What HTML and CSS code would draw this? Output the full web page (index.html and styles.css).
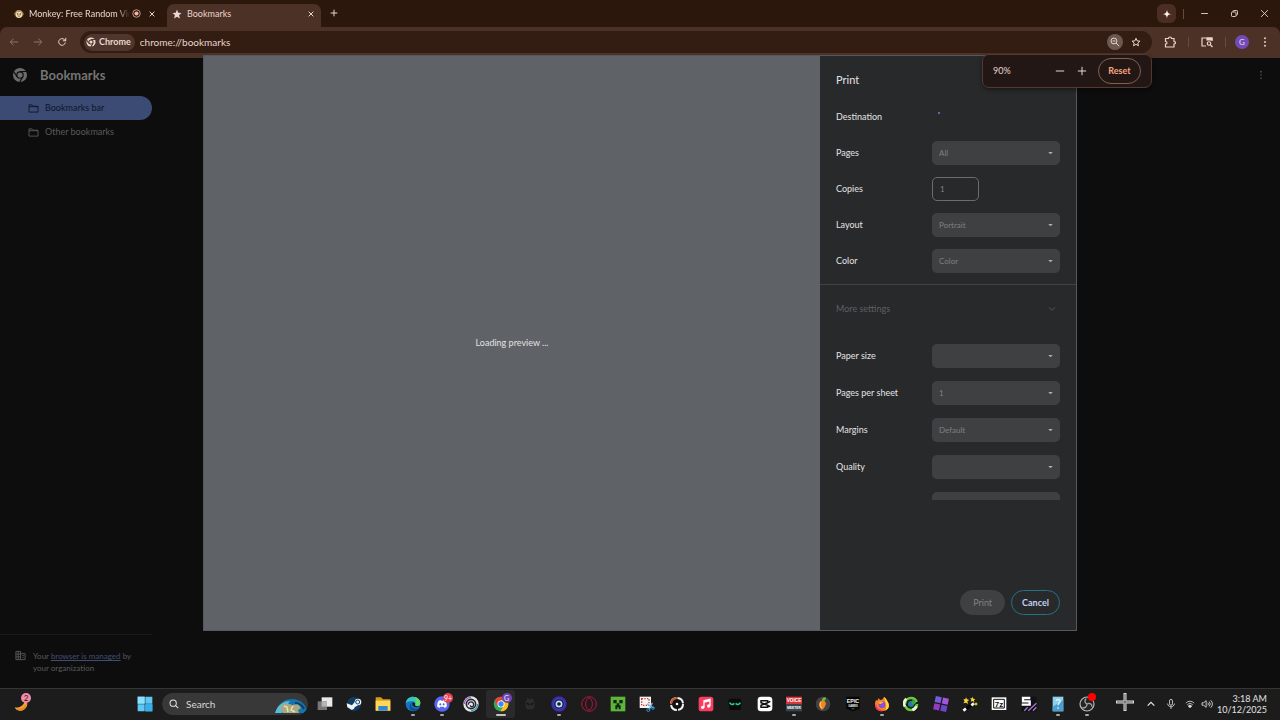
FILE: index.html
```html
<!DOCTYPE html>
<html lang="en">
<head>
<meta charset="UTF-8" />
<meta name="viewport" content="width=device-width, initial-scale=1" />
<title>Bookmarks</title>
<link rel="stylesheet" href="styles.css">
</head>
<body>
<header class="browser">
  <div class="tabstrip">
    <div class="tab">
      <svg class="favicon" viewBox="0 0 24 24"><circle cx="4" cy="12" r="3.5" fill="#9b744d"/><circle cx="20" cy="12" r="3.5" fill="#9b744d"/><circle cx="12" cy="12" r="9.5" fill="#b48a59"/><path d="M5 12c0-7 7-6 7-3 0-3 7-4 7 3 2 4-2 9-7 9s-9-5-7-9z" fill="#f0dfb8"/><circle cx="9" cy="12" r="1.6" fill="#332015"/><circle cx="15" cy="12" r="1.6" fill="#332015"/><path d="M9 16q3 3 6 0" stroke="#332015" stroke-width="1.5" fill="none"/></svg>
      <a class="tab-title faded" href="#">Monkey: Free Random Vide</a>
      <svg class="recording" viewBox="0 0 24 24"><circle cx="12" cy="12" r="10" fill="none" stroke="#d9a394" stroke-width="2.4"/><circle cx="12" cy="12" r="5.5" fill="#f0b6a6"/></svg>
      <button class="icon-btn small" aria-label="Close tab"><svg viewBox="0 0 24 24"><path d="M5 5l14 14M19 5L5 19"/></svg></button>
    </div>
    <div class="tab active">
      <svg class="favicon" viewBox="0 0 24 24"><path d="M12 1l3 8 8 .6-6 5 2 8-7-4.300-7 4.300 2-8-6-5 8-.6z" fill="#ecd8d0"/></svg>
      <a class="tab-title" href="#">Bookmarks</a>
      <button class="icon-btn small" aria-label="Close tab"><svg viewBox="0 0 24 24"><path d="M5 5l14 14M19 5L5 19"/></svg></button>
    </div>
    <button class="icon-btn new-tab" aria-label="New tab"><svg viewBox="0 0 24 24"><path d="M12 2v20M2 12h20"/></svg></button>
    <div class="window-controls">
      <button class="icon-btn spark" aria-label="Gemini"><svg viewBox="0 0 24 24"><path d="M12 1c1 8 3 10 11 11-8 1-10 3-11 11-1-8-3-10-11-11 8-1 10-3 11-11z" fill="#fff0ea" stroke="none"/></svg></button>
      <span class="divider"></span>
      <button class="icon-btn win" aria-label="Minimize"><svg viewBox="0 0 24 24"><path d="M3 12h18"/></svg></button>
      <button class="icon-btn win" aria-label="Restore"><svg viewBox="0 0 24 24"><rect x="4" y="8" width="12" height="12" rx="2"/><path d="M8 8V6q0-2 2-2h8q2 0 2 2v8q0 2-2 2h-2"/></svg></button>
      <button class="icon-btn win" aria-label="Close"><svg viewBox="0 0 24 24"><path d="M3 3l18 18M21 3L3 21"/></svg></button>
    </div>
  </div>

  <div class="toolbar">
    <nav class="nav-buttons">
      <button class="icon-btn dim" aria-label="Back"><svg viewBox="0 0 24 24"><path d="M22 12H3M11 4l-8 8 8 8"/></svg></button>
      <button class="icon-btn dim" aria-label="Forward"><svg viewBox="0 0 24 24"><path d="M2 12h19M13 4l8 8-8 8"/></svg></button>
      <button class="icon-btn" aria-label="Reload"><svg viewBox="0 0 24 24"><path d="M20 13a8 8 0 1 1-2.500-7L21 9M21 2v7h-7"/></svg></button>
    </nav>
    <div class="omnibox">
      <button class="site-chip">
        <svg viewBox="0 0 24 24"><circle cx="12" cy="12" r="11" fill="#e9d5cd"/><circle cx="12" cy="12" r="5" fill="#e9d5cd" stroke="#4f362d" stroke-width="2.5"/><path d="M12 6h10M6.800 15L1.500 7M17 15l-5 8.500" stroke="#4f362d" stroke-width="2.500"/></svg>
        Chrome
      </button>
      <input class="url" type="text" aria-label="Address" value="chrome://bookmarks">
      <button class="icon-btn zoomed" aria-label="Zoom"><svg viewBox="0 0 24 24"><circle cx="9.500" cy="9.500" r="7"/><path d="M14.500 14.500L22 22M6.500 9.500h6"/></svg></button>
      <button class="icon-btn star" aria-label="Bookmark this page"><svg viewBox="0 0 24 24"><path d="M12 3l2.700 6.300 6.800.6-5.200 4.500 1.600 6.700L12 17.500l-5.900 3.600 1.600-6.700L2.500 9.900l6.800-.6z"/></svg></button>

      <div class="zoom-bubble">
        <span class="zoom-value">90%</span>
        <button class="icon-btn" aria-label="Zoom out"><svg viewBox="0 0 24 24"><path d="M2 12h20"/></svg></button>
        <button class="icon-btn" aria-label="Zoom in"><svg viewBox="0 0 24 24"><path d="M12 2v20M2 12h20"/></svg></button>
        <button class="reset">Reset</button>
      </div>
    </div>
    <div class="toolbar-actions">
      <button class="icon-btn" aria-label="Extensions"><svg viewBox="0 0 24 24"><path d="M3 5h6c0-4 6-4 6 0h5v6c4 0 4 5 0 5v6H3v-6c4 0 4-5 0-5z"/></svg></button>
      <span class="divider"></span>
      <button class="icon-btn" aria-label="Search tabs"><svg viewBox="0 0 24 24"><path d="M10 20H2V4h20v6M12 6h10"/><path d="M12 4h10v4H12z" fill="currentColor"/><circle cx="16" cy="15" r="3.500"/><path d="M19 18l4 4"/></svg></button>
      <span class="divider"></span>
      <button class="avatar" aria-label="Profile">G</button>
      <button class="icon-btn menu" aria-label="Menu"><svg class="dots" viewBox="0 0 24 24"><circle cx="12" cy="3" r="2.300"/><circle cx="12" cy="12" r="2.300"/><circle cx="12" cy="21" r="2.300"/></svg></button>
    </div>
  </div>
</header>

<main class="page">
  <aside class="sidebar">
    <div class="brand">
      <svg viewBox="0 0 24 24"><circle cx="12" cy="12" r="12" fill="#6c6c6c"/><circle cx="12" cy="12" r="5.500" fill="#6c6c6c" stroke="#0d0d0d" stroke-width="2"/><path d="M12 6h11M6.800 15L1.500 6.500M17 15l-5.500 9" stroke="#0d0d0d" stroke-width="2"/></svg>
      <h1>Bookmarks</h1>
    </div>
    <a class="folder selected" href="#"><svg viewBox="0 0 24 20"><path d="M2 2h7l3 3h10v13H2zM2 6h20"/></svg>Bookmarks bar</a>
    <a class="folder" href="#"><svg viewBox="0 0 24 20"><path d="M2 2h7l3 3h10v13H2zM2 6h20"/></svg>Other bookmarks</a>
    <div class="managed">
      <svg viewBox="0 0 24 24"><path d="M2 3h10v18H2zM12 8h10v13H12M2 9h10M2 15h10M7 3v18M16 12h3M16 16h3"/></svg>
      <p>Your <a href="#">browser is managed</a> by your organization</p>
    </div>
  </aside>
  <button class="icon-btn page-menu" aria-label="Organize"><svg class="dots" viewBox="0 0 24 24"><circle cx="12" cy="4" r="2"/><circle cx="12" cy="12" r="2"/><circle cx="12" cy="20" r="2"/></svg></button>

  <div class="overlay">
    <section class="dialog" role="dialog" aria-label="Print">
      <div class="preview">Loading preview&nbsp;...</div>
      <form class="settings">
        <h2>Print</h2>
        <div class="scroll">
          <div class="fields">
            <div class="field"><span>Destination</span><i class="spinner"></i></div>
            <div class="field"><label for="pages">Pages</label><select id="pages" disabled><option>All</option></select></div>
            <div class="field"><label for="copies">Copies</label><input id="copies" type="text" value="1" disabled></div>
            <div class="field"><label for="layout">Layout</label><select id="layout" disabled><option>Portrait</option></select></div>
            <div class="field"><label for="color">Color</label><select id="color" disabled><option>Color</option></select></div>
          </div>
          <button type="button" class="more" disabled>More settings<svg viewBox="0 0 24 24"><path d="M3 7l9 9 9-9"/></svg></button>
          <div class="fields extra">
            <div class="field"><label for="paper">Paper size</label><select id="paper" disabled><option></option></select></div>
            <div class="field"><label for="sheet">Pages per sheet</label><select id="sheet" disabled><option>1</option></select></div>
            <div class="field"><label for="margins">Margins</label><select id="margins" disabled><option>Default</option></select></div>
            <div class="field"><label for="quality">Quality</label><select id="quality" disabled><option></option></select></div>
            <div class="field"><label for="scale">Scale</label><select id="scale" disabled><option></option></select></div>
          </div>
        </div>
        <div class="buttons">
          <button type="button" class="pill" disabled>Print</button>
          <button type="button" class="pill cancel">Cancel</button>
        </div>
      </form>
    </section>
  </div>
</main>

<footer class="taskbar">
  <button class="app widget" aria-label="Weather">
    <svg viewBox="0 0 24 24"><path d="M17 4c7 8 1 18-8 18-4 0-7-2-8-5 7 2 15-3 16-13z" fill="#f2a532"/><path d="M2 18c7 3 14-1 17-8 1 7-4 12-10 12-3 0-6-2-7-4z" fill="#e58b22"/></svg>
    <span class="badge pink">2</span>
  </button>
  <button class="app start" aria-label="Start"><svg viewBox="0 0 24 24"><path d="M1 1h10.500v10.500H1zM12.500 1H23v10.500H12.500zM1 12.500h10.500V23H1zM12.500 12.500H23V23H12.500z" fill="#5cc8f5"/><path d="M1 1h10.500v10.500H1z" fill="#8be0fb"/><path d="M12.500 12.500H23V23H12.500z" fill="#35b0ee"/></svg></button>
  <label class="search">
    <svg class="lens" viewBox="0 0 24 24"><circle cx="10" cy="10" r="7.500"/><path d="M15.500 15.500L22 22"/></svg>
    <input type="text" placeholder="Search" aria-label="Search">
    <svg class="art" viewBox="0 0 32 14"><path d="M0 14C3 4 10 0 17 0c8 0 14 5 15 12l-2 2z" fill="#1673b0"/><path d="M0 14C3 5 9 2 15 2l-4 5-4 7z" fill="#57bdd9"/><path d="M7 6l5-2 5 2 6-1 3 4-3 2 1 3H8l-1-3-3-1z" fill="#a9a883"/><path d="M9 7l3 1 1 5M18 7l-2 4 4 2" stroke="#ebe0ae" stroke-width="1.500" fill="none"/><path d="M20 4q6 0 9 6" stroke="#0b3e68" stroke-width="2" fill="none"/></svg>
  </label>
  <div class="apps">
    <button class="app" aria-label="Task view"><svg viewBox="0 0 24 24"><path d="M7 2h16v14H7z" fill="#e9e9e9"/><path d="M1 8h14v13H1z" fill="#777"/><path d="M7 8h8v8H7z" fill="#b5b5b5"/></svg></button>
    <button class="app" aria-label="Steam"><svg viewBox="0 0 24 24"><circle cx="12" cy="12" r="10.500" fill="#123b60"/><path d="M1 11l8 3 4-5a5 5 0 1 1 5 5l-5 3a4 4 0 0 1-7 2l-4-2z" fill="#eef3f7"/><circle cx="17.500" cy="9" r="3" fill="#e7eef5" stroke="#174d79" stroke-width="1.500"/></svg></button>
    <button class="app" aria-label="File Explorer"><svg viewBox="0 0 24 24"><path d="M1 2h8l3 3h11v17H1z" fill="#d79b19"/><path d="M1 7h22v15H1z" fill="#ffd65a"/><path d="M5 15h14v7H5z" fill="#2e8acb"/></svg></button>
    <button class="app running" aria-label="Edge"><svg viewBox="0 0 24 24"><circle cx="12" cy="12" r="11" fill="#1475c8"/><path d="M1 11C2 4 7 1 12 1c7 0 11 5 11 9 0 5-6 6-8 4 2-4-1-6-4-6-4 0-7 0-10 3z" fill="#39c6b7"/><path d="M15 2c5 1 8 5 8 8 0 5-6 6-8 4 2-3 1-8 0-12z" fill="#65d86c"/><path d="M10 11c-3 5 2 10 11 7-6 8-16 4-14-3 0-2 1-3 3-4z" fill="#124f91"/><path d="M11 10c-1 4 2 7 8 7l3-2c-4 1-7 0-7-2 1-2-1-4-4-3z" fill="#1b1b1b"/></svg></button>
    <button class="app running" aria-label="Discord"><svg viewBox="0 0 24 24"><circle cx="12" cy="12" r="11.500" fill="#5865f2"/><path d="M7 7l3-1 1 1h2l1-1 3 1c2 3 2.500 6 2 9l-3 2-1.500-2h-5L8 18l-3-2c-.5-3 0-6 2-9z" fill="#fff"/><circle cx="9.500" cy="12.500" r="1.600" fill="#5865f2"/><circle cx="14.500" cy="12.500" r="1.600" fill="#5865f2"/></svg><span class="badge red">9+</span></button>
    <button class="app" aria-label="Ubisoft"><svg viewBox="0 0 24 24"><circle cx="12" cy="12" r="11.500" fill="#e8e8ec"/><path d="M2 12a10 10 0 0 1 10-10" stroke="#9d61c6" stroke-width="2" fill="none"/><path d="M22 12a10 10 0 0 1-10 10" stroke="#3b96a8" stroke-width="2" fill="none"/><circle cx="12" cy="12" r="7" fill="none" stroke="#252832" stroke-width="2.400"/><path d="M8 13c0-6 8-5 8 0 0 4-5 4-5 1" fill="none" stroke="#252832" stroke-width="2"/></svg></button>
    <button class="app current" aria-label="Chrome"><svg viewBox="0 0 24 24"><circle cx="12" cy="12" r="11" fill="#35a853"/><path d="M2.500 6.500A11 11 0 0 1 21.500 6.500H12L7 15z" fill="#ea4335"/><path d="M21.500 6.500A11 11 0 0 1 11 23l5.500-8.500L12 6.500z" fill="#fbc116"/><circle cx="12" cy="12" r="5.300" fill="#fff"/><circle cx="12" cy="12" r="4" fill="#4285f4"/></svg><span class="badge purple">G</span></button>
    <button class="app" aria-label="Game"><svg viewBox="0 0 24 24"><path d="M7 6l1-3 4 2 4-2 1 3c3 4 2 12-1 14H8C5 18 4 10 7 6z" fill="#2b2c2e"/><path d="M7 11l4 2M17 11l-4 2" stroke="#101010" stroke-width="2"/></svg></button>
    <button class="app running" aria-label="Recorder"><svg viewBox="0 0 24 24"><circle cx="12" cy="12" r="11.500" fill="#3f28b3"/><circle cx="12" cy="12" r="8" fill="#101940" stroke="#3c50b0" stroke-width="1.500"/><circle cx="12" cy="12" r="4" fill="none" stroke="#c8d6f6" stroke-width="2.500"/></svg></button>
    <button class="app" aria-label="Opera GX"><svg viewBox="0 0 24 24"><g fill="none" stroke="#b3153f" stroke-width="1.500"><circle cx="12" cy="12" r="11"/><ellipse cx="12" cy="12" rx="5" ry="9"/></g></svg></button>
    <button class="app" aria-label="Minecraft"><svg viewBox="0 0 24 24"><path d="M1 1h22v22H1z" fill="#5db63b"/><path d="M5 6h5v5H5zM14 6h5v5h-5zM10 11h4v3h2v6h-3v-3h-2v3H8v-6h2z" fill="#102411"/></svg></button>
    <button class="app" aria-label="Snipping Tool"><svg viewBox="0 0 24 24"><path d="M1 1h17v17H1z" fill="#f3f3f3"/><path d="M4 4h11v10H4z" stroke="#cc392e" stroke-width="2" stroke-dasharray="2 2" fill="none"/><path d="M12 12l10 6M20 10l-5 11" stroke="#79b9df" stroke-width="2"/><circle cx="14" cy="21" r="2.300" fill="none" stroke="#2c8cca" stroke-width="1.500"/><circle cx="21" cy="18" r="2" fill="none" stroke="#2c8cca" stroke-width="1.500"/></svg></button>
    <button class="app" aria-label="Tracker"><svg viewBox="0 0 24 24"><circle cx="12" cy="12" r="9" fill="#111" stroke="#f1f1f1" stroke-width="3" stroke-dasharray="12 2"/><path d="M3 12a9 9 0 0 1 9-9" fill="none" stroke="#c7512b" stroke-width="3"/><circle cx="12" cy="12" r="2" fill="#fff"/></svg></button>
    <button class="app" aria-label="Music"><svg viewBox="0 0 24 24"><rect x="1" y="1" width="22" height="22" rx="4" fill="#fa3c60"/><path d="M9 17V7l9-2v10M9 9l9-2" stroke="#fff" stroke-width="2" fill="none"/><circle cx="7" cy="17" r="2.500" fill="#fff"/><circle cx="16" cy="15" r="2.500" fill="#fff"/></svg></button>
    <button class="app" aria-label="Mask"><svg viewBox="0 0 24 24"><path d="M4 4h16l2 5-2 12H4L2 9z" fill="#090b0b"/><path d="M4 10q3 5 7 1M13 11q4 4 7-1" stroke="#28cda0" stroke-width="2.500" fill="none"/></svg></button>
    <button class="app" aria-label="CapCut"><svg viewBox="0 0 24 24"><rect x="1" y="1" width="22" height="22" rx="5" fill="#fff"/><path d="M20 8l-4 2V7H6v3l10 4v3H6v-3l10-4M20 16l-4-2" fill="none" stroke="#111" stroke-width="2.300"/></svg></button>
    <button class="app running" aria-label="Voicemeeter"><svg viewBox="0 0 24 24"><path d="M0 1h24v11H0z" fill="#d6353b"/><path d="M0 12h24v11H0z" fill="#3b434d"/><g fill="#fff" font-family="Liberation Sans" font-weight="bold" font-size="7" text-anchor="middle"><text x="12" y="9">VOICE</text><text x="12" y="20" font-size="5">MEETER</text></g></svg></button>
    <button class="app" aria-label="FL Studio"><svg viewBox="0 0 24 24"><circle cx="12" cy="12" r="11" fill="#404246"/><path d="M8 8c3-3 10 0 8 5-1 4-4 7-6 8-3-4-5-9-2-13z" fill="#f3841f"/><path d="M9 9c-2 3-1 7 1 9" stroke="#ffc15a" stroke-width="2" fill="none"/><path d="M11 8c-2-3 1-6 5-6 1 3-1 6-5 6z" fill="#78b63a"/></svg></button>
    <button class="app" aria-label="Epic Games"><svg viewBox="0 0 24 24"><path d="M2 1h20v18l-10 4-10-4z" fill="#050505"/><g fill="#f6f6f6" font-family="Liberation Sans" font-weight="bold" text-anchor="middle"><text x="12" y="11" font-size="8">EPIC</text><text x="12" y="17" font-size="4">GAMES</text></g><path d="M9 19h6l-3 1z" fill="#fff"/></svg></button>
    <button class="app running" aria-label="Firefox"><svg viewBox="0 0 24 24"><path d="M3 6l2 1 2-4 2 3c3-1 5-1 6-5 2 2 4 4 5 7 6 8 0 15-8 15C3 23-1 14 3 6z" fill="#ff7d26"/><path d="M15 1c2 2 4 4 5 7 5 8 1 12-3 14 3-7 0-13-2-21z" fill="#ffd43a"/><path d="M3 11c0 6 6 12 13 10-8 5-17-2-13-10z" fill="#f23653"/><circle cx="12" cy="13" r="5" fill="#8552d5"/><path d="M6 10c3-3 7-2 8 0-2 0-3 2-5 2z" fill="#ffb338"/></svg></button>
    <button class="app" aria-label="Sync"><svg viewBox="0 0 24 24"><circle cx="12" cy="12" r="9" fill="none" stroke="#69c83b" stroke-width="4" stroke-dasharray="24 4"/><path d="M5 4a10 10 0 0 0-2 12M20 15a9 9 0 0 1-6 6" stroke="#eef3d3" stroke-width="4" fill="none"/><circle cx="12" cy="12" r="4.500" fill="#1e7d9c"/><path d="M12 8h2V4l6 6-5 4z" fill="#39a45a"/></svg></button>
    <button class="app" aria-label="Tiles"><svg viewBox="0 0 24 24"><g transform="rotate(12 12 12)"><path d="M2 2h9v9H2z" fill="#775bdd"/><path d="M13 2h9v9h-9z" fill="#a257da"/><path d="M2 13h9v9H2z" fill="#943ac2"/><path d="M13 13h9v9h-9z" fill="#6946ce"/></g></svg></button>
    <button class="app" aria-label="Wand"><svg viewBox="0 0 24 24"><path d="M2 22L17 12" stroke="#080808" stroke-width="5"/><path d="M2 22l4-3M14 14l4-3" stroke="#f3f3f3" stroke-width="4"/><path d="M6 2l1.500 3L11 6 8 8l1 4-3-2-4 1 2-3-2-3h3zM16 1l1 3 3 .5-2 2 .5 3-2.500-2-3 1 1-3-2-2h3zM21 9l1 2 2 1-2 1-1 2-1-2-2-1 2-1z" fill="#f8d63c"/></svg></button>
    <button class="app" aria-label="7-Zip"><svg viewBox="0 0 24 24"><path d="M1 2h22v19H1z" fill="#fff"/><path d="M4 5h16v13H4z" fill="none" stroke="#111" stroke-width="1.500"/><text x="12" y="16" fill="#111" font-family="Liberation Sans" font-weight="bold" font-size="12" text-anchor="middle">7z</text></svg></button>
    <button class="app" aria-label="Streaming tool"><svg viewBox="0 0 24 24"><path d="M1 1h22v22H1z" fill="#11101a"/><path d="M5 22l5-5M11 22L23 11M18 22l5-5" stroke="#a878c8" stroke-width="2"/><path d="M14 3H3v5h10v5H1" fill="none" stroke="#fff" stroke-width="3.500"/></svg></button>
    <button class="app running" aria-label="Notes"><svg viewBox="0 0 24 24"><path d="M4 1h16v22H4z" fill="#8cd0ef"/><path d="M4 16l16-10v17H4z" fill="#4b9ed0"/><path d="M9 7q3-4 6 0c1 3-3 3-3 7M12 17v2" fill="none" stroke="#e9f7fd" stroke-width="2"/></svg></button>
    <button class="app running" aria-label="OBS"><svg viewBox="0 0 24 24"><circle cx="12" cy="12" r="10.500" fill="#242426" stroke="#bababa" stroke-width="1.800"/><path d="M12 12c-4-2-4-6-1-8M12 12c4-2 8 0 7 4M12 12c0 5-4 7-7 5" stroke="#a2a2a2" stroke-width="2" fill="none"/></svg><span class="badge rec"></span></button>
  </div>
  <div class="tray">
    <svg class="crosshair" viewBox="0 0 18 18"><path d="M9 0v18M0 9h18" stroke="#ddd" stroke-width="3"/><path d="M9 1v16M1 9h16" stroke="#555" stroke-width="1"/></svg>
    <button class="tray-btn" aria-label="Show hidden icons"><svg viewBox="0 0 24 24"><path d="M4 16l8-8 8 8" stroke-width="3"/></svg></button>
    <button class="tray-btn" aria-label="Microphone"><svg viewBox="0 0 24 24"><rect x="8.500" y="1" width="7" height="14" rx="3.500"/><path d="M4 11c0 10 16 10 16 0M12 19v5"/></svg></button>
    <button class="tray-btn quick" aria-label="Network and volume">
      <svg viewBox="0 0 24 24"><path d="M2 10c6-6 14-6 20 0M5.500 14c4-4 9-4 13 0"/><path d="M8 17q4-4 8 0l-4 4z" fill="currentColor"/></svg>
      <svg class="speaker" viewBox="0 0 28 24"><path d="M2 9h4l6-5v16l-6-5H2zM16 9q3 3 0 6M19 6q6 6 0 12M23 3q8 9 0 18"/></svg>
    </button>
    <div class="clock"><span>3:18 AM</span><span>10/12/2025</span></div>
  </div>
</footer>
</body>
</html>
```
FILE: styles.css
```css
* {
  box-sizing: border-box;
}
body {
  margin: 0;
  height: 100vh;
  display: flex;
  flex-direction: column;
  overflow: hidden;
  background: #0d0d0d;
  color: #e3e3e3;
  font-family: Lato, "Open Sans", sans-serif;
  font-size: 9px;
  line-height: 12px;
}
button, input, select {
  font: inherit;
  color: inherit;
  border: 0;
  margin: 0;
  padding: 0;
  background: none;
}
a {
  color: inherit;
  text-decoration: none;
}
svg {
  display: block;
  flex: none;
}

/* Browser chrome */
.browser {
  color: #e9d5cd;
  background: #2c170d;
}
.tabstrip {
  display: flex;
  align-items: flex-end;
  height: 27px;
  padding-left: 6px;
}
.tab {
  display: flex;
  align-items: center;
  gap: 5px;
  width: 156px;
  height: 23px;
  padding: 0 4px 4px 8px;
}
.tab.active {
  width: 154px;
  margin-left: 5px;
  padding-left: 5px;
  border-radius: 7px 7px 0 0;
  background: #4c3127;
}
.favicon {
  width: 10px;
  height: 10px;
}
.tab-title {
  flex: 1;
  overflow: hidden;
  white-space: nowrap;
}
.tab-title.faded {
  margin-right: -3px;
  mask-image: linear-gradient(90deg, #000 88%, transparent);
}
.recording {
  width: 9px;
  height: 9px;
}
.icon-btn {
  display: flex;
  align-items: center;
  justify-content: center;
  flex: none;
  width: 20px;
  height: 20px;
  border-radius: 50%;
}
.icon-btn svg {
  width: 10px;
  height: 10px;
  fill: none;
  stroke: currentColor;
  stroke-width: 2.4;
}
.icon-btn .dots {
  fill: currentColor;
  stroke: none;
}
.icon-btn.small {
  width: 12px;
  height: 12px;
}
.icon-btn.small svg {
  width: 8px;
  height: 8px;
  stroke-width: 3;
}
.new-tab {
  margin: 0 0 4px 3px;
}
.new-tab svg {
  width: 8px;
  height: 8px;
  stroke-width: 3;
}
.window-controls {
  display: flex;
  align-items: center;
  height: 27px;
  margin-left: auto;
  padding-right: 1px;
}
.window-controls .spark {
  width: 19px;
  height: 19px;
  margin-right: 7px;
  border-radius: 6px;
  background: #4a2e23;
}
.win {
  width: 30px;
}
.win svg {
  width: 9px;
  height: 9px;
}
.divider {
  width: 1px;
  height: 10px;
  background: #6a4a3d;
}
.window-controls .divider {
  margin-right: 5px;
}
.toolbar {
  display: flex;
  align-items: center;
  height: 31px;
  padding-bottom: 1px;
  background: #4c3127;
  border-radius: 7px 7px 0 0;
}
.nav-buttons {
  display: flex;
  gap: 4px;
  width: 80px;
  padding-left: 4px;
}
.icon-btn.dim {
  color: #8f7468;
}
.omnibox {
  position: relative;
  display: flex;
  align-items: center;
  flex: 1;
  height: 22px;
  padding: 0 6px 0 4px;
  border-radius: 11px;
  background: #331d13;
}
.site-chip {
  display: flex;
  align-items: center;
  gap: 3px;
  height: 17px;
  padding: 0 4px 0 2px;
  border-radius: 9px;
  background: #4f362d;
  font-weight: 700;
}
.site-chip svg {
  width: 10px;
  height: 10px;
}
.url {
  flex: 1;
  min-width: 0;
  margin-left: 5px;
  font-size: 10px;
}
.zoomed {
  width: 16px;
  height: 16px;
  background: #6d5850;
}
.star {
  margin-left: 3px;
}
.toolbar-actions {
  display: flex;
  align-items: center;
  gap: 8px;
  padding: 0 5px 0 8px;
}
.toolbar-actions svg {
  width: 12px;
  height: 12px;
}
.toolbar-actions .menu svg {
  width: 10px;
  height: 10px;
}
.avatar {
  width: 14px;
  height: 14px;
  border-radius: 50%;
  background: #744bb5;
  color: #eadff8;
  font-size: 8px;
}
.toolbar-actions .divider + .avatar {
  margin-left: 1px;
}
.toolbar-actions .menu {
  margin-left: -2px;
}
.zoom-bubble {
  position: absolute;
  top: 23px;
  right: 0;
  z-index: 4;
  display: flex;
  align-items: center;
  width: 170px;
  height: 34px;
  padding: 0 10px;
  border: 1px solid #54392e;
  border-radius: 7px;
  background: #231716;
  box-shadow: 0 2px 4px rgba(0, 0, 0, 0.4);
}
.zoom-value {
  flex: 1;
}
.zoom-bubble .icon-btn {
  width: 22px;
}
.reset {
  width: 43px;
  height: 26px;
  margin-left: 5px;
  border: 1px solid #80604f;
  border-radius: 13px;
  color: #f8a581;
  font-weight: 700;
}

/* Bookmarks page */
.page {
  position: relative;
  flex: 1;
  min-height: 0;
  display: flex;
  justify-content: space-between;
}
.sidebar {
  display: flex;
  flex-direction: column;
  width: 152px;
  color: #5a5a5a;
}
.brand {
  display: flex;
  align-items: center;
  gap: 13px;
  height: 38px;
  padding: 0 0 4px 13px;
}
.brand svg {
  width: 14px;
  height: 14px;
}
.brand h1 {
  margin: 0;
  color: #747474;
  font-size: 13px;
  font-weight: 700;
}
.folder {
  display: flex;
  align-items: center;
  gap: 6px;
  height: 24px;
  padding-left: 28px;
  border-radius: 0 12px 12px 0;
}
.folder svg {
  width: 11px;
  height: 9px;
  fill: none;
  stroke: currentColor;
  stroke-width: 2;
}
.folder.selected {
  background: #3b4b73;
  color: #0d172b;
}
.managed {
  display: flex;
  gap: 7px;
  margin-top: auto;
  padding: 15px 12px 14px 15px;
  border-top: 1px solid #191919;
}
.managed svg {
  width: 11px;
  height: 11px;
  fill: none;
  stroke: currentColor;
  stroke-width: 2;
}
.managed p {
  margin: 0;
  font-size: 8px;
}
.managed a {
  color: #414d73;
  text-decoration: underline;
}
.page-menu {
  margin: 7px 9px 0 0;
  color: #555;
}

/* Print dialog */
.overlay {
  position: absolute;
  inset: -3px 0 0;
  z-index: 3;
  display: flex;
  justify-content: center;
  padding-bottom: 57px;
}
.dialog {
  display: flex;
  width: 874px;
  max-width: 100%;
  border: 1px solid #55585c;
  background: #28292b;
}
.preview {
  flex: 1;
  display: grid;
  place-items: center;
  background: #5f6267;
}
.settings {
  display: flex;
  flex-direction: column;
  width: 256px;
}
.settings h2 {
  margin: 0;
  padding: 17px 16px 14px;
  font-size: 11px;
  font-weight: 400;
  line-height: 14px;
}
.scroll {
  height: 399px;
  overflow: hidden;
}
.fields {
  display: grid;
  gap: 12px;
  padding: 4px 16px 11px;
}
.fields.extra {
  gap: 13px;
  padding-top: 11px;
}
.field {
  display: flex;
  align-items: center;
  height: 24px;
}
.field span, .field label {
  width: 96px;
}
.field select, .field input {
  height: 24px;
  padding: 0 7px;
  border-radius: 5px;
  color: #818181;
  font-size: 8px;
  opacity: 1;
}
.field select {
  flex: 1;
  appearance: none;
  background: #3f4042 url("data:image/svg+xml,%3Csvg xmlns='http://www.w3.org/2000/svg' viewBox='0 0 6 4'%3E%3Cpath d='M0 0h6L3 3z' fill='%23b0b0b0'/%3E%3C/svg%3E") no-repeat right 7px center / 5px 3px;
}
.field input {
  width: 47px;
  border: 1px solid #6b6c6e;
}
.spinner {
  width: 2px;
  height: 2px;
  margin: 0 0 9px 6px;
  border-radius: 50%;
  background: #6285d2;
}
.more {
  display: flex;
  align-items: center;
  justify-content: space-between;
  width: 100%;
  height: 49px;
  padding: 0 20px 0 16px;
  border-top: 1px solid #414244;
  color: #5e5f61;
}
.more svg {
  width: 8px;
  height: 8px;
  fill: none;
  stroke: currentColor;
  stroke-width: 2.5;
}
.buttons {
  display: flex;
  justify-content: flex-end;
  gap: 6px;
  margin-top: auto;
  padding: 15px 16px;
}
.pill {
  height: 25px;
  padding: 0 12px;
  border: 1px solid #3f4042;
  border-radius: 13px;
  background: #3f4042;
  color: #818181;
  font-weight: 400;
}
.pill.cancel {
  padding: 0 10px;
  border-color: #267184;
  background: none;
  color: #c4cff5;
  font-weight: 700;
}

/* Taskbar */
.taskbar {
  display: flex;
  align-items: center;
  height: 32px;
  padding-bottom: 1px;
  border-top: 1px solid #353535;
  background: #1c1c1c;
}
.app {
  position: relative;
  display: grid;
  place-items: center;
  height: 28px;
}
.app svg {
  width: 16px;
  height: 16px;
}
.widget {
  width: 28px;
  margin: 0 100px 0 8px;
}
.start {
  width: 17px;
}
.search {
  display: flex;
  align-items: center;
  gap: 7px;
  width: 146px;
  height: 22px;
  margin: 0 2px 0 9px;
  padding-left: 7px;
  border-radius: 11px;
  background: #383838;
  overflow: hidden;
}
.search .lens {
  width: 10px;
  height: 10px;
  fill: none;
  stroke: #e2e2e2;
  stroke-width: 2.5;
}
.search input {
  flex: 1;
  min-width: 0;
  font-size: 10px;
}
.search input::placeholder {
  color: #d9d9d9;
  opacity: 1;
}
.search .art {
  align-self: flex-end;
  width: 32px;
  height: 14px;
  margin: 0 1px 2px 0;
}
.apps {
  flex: 1;
  display: grid;
  grid-template-columns: repeat(27, 1fr);
}
.running::after, .current::after {
  content: "";
  position: absolute;
  bottom: 2px;
  left: calc(50% - 2px);
  width: 4px;
  height: 2px;
  border-radius: 1px;
  background: #a5a5a5;
}
.current {
  border-radius: 3px;
  background: #2b2a2a;
}
.current::after {
  left: calc(50% - 5px);
  width: 10px;
  background: #c6c1bd;
}
.badge {
  position: absolute;
  top: 3px;
  left: calc(50% + 1px);
  width: 10px;
  height: 10px;
  border-radius: 50%;
  font-size: 7px;
  line-height: 10px;
  text-align: center;
}
.pink {
  left: calc(50% - 1px);
  background: #f28ba8;
  color: #30171f;
  font-size: 8px;
}
.red {
  background: #e44152;
  color: #fff;
}
.purple {
  background: #7145b5;
  color: #eee;
}
.rec {
  width: 8px;
  height: 8px;
  background: #f00;
}
.tray {
  display: flex;
  align-items: center;
  width: 178px;
  padding: 0 13px 0 14px;
}
.crosshair {
  width: 18px;
  height: 18px;
  margin: 0 7px 4px 0;
}
.tray-btn {
  display: flex;
  align-items: center;
  justify-content: center;
  gap: 6px;
  width: 21px;
  height: 24px;
}
.tray-btn svg {
  width: 10px;
  height: 10px;
  fill: none;
  stroke: currentColor;
  stroke-width: 2;
}
.quick {
  width: 38px;
}
.tray-btn .speaker {
  width: 12px;
}
.clock {
  display: flex;
  flex-direction: column;
  align-items: flex-end;
  flex: 1;
  line-height: 11px;
}
```
